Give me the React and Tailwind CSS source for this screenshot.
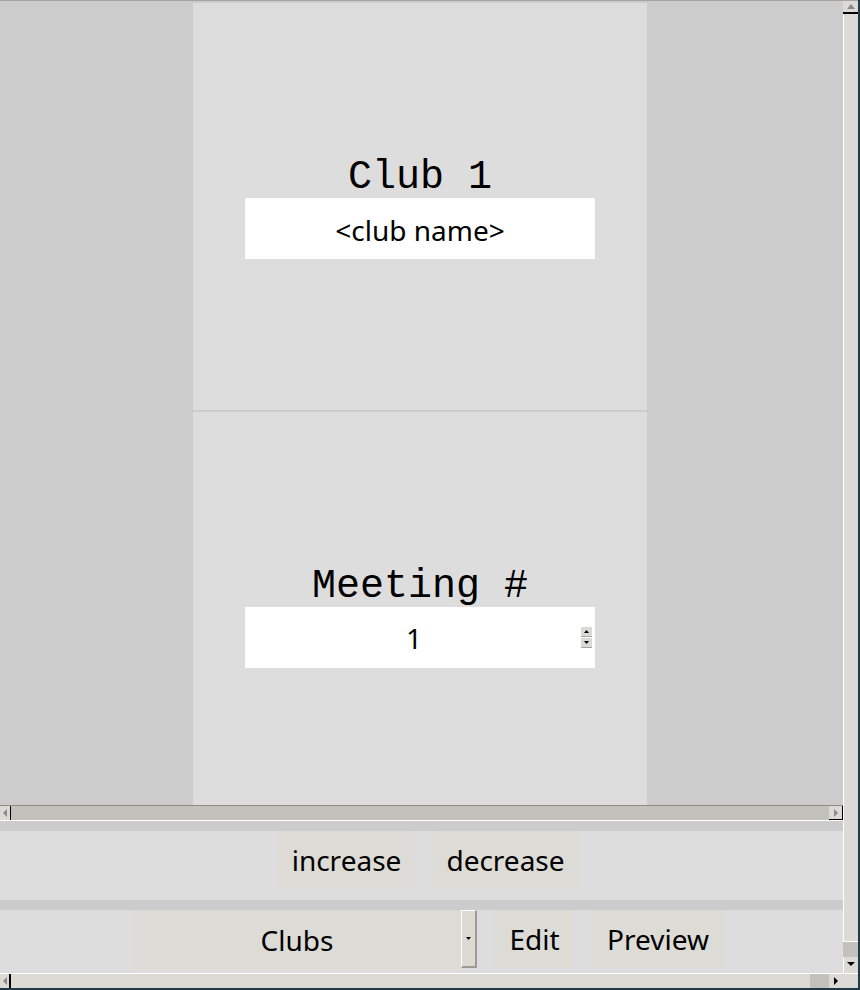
import React from "react";

const sans = { fontFamily: '"Noto Sans", "Open Sans", sans-serif' };
const mono = { fontFamily: '"Liberation Mono", "DejaVu Sans Mono", monospace' };

function Tri({ dir = "up", color = "#000", w = 6, h = 4 }) {
  const pts =
    dir === "up"
      ? `0,${h} ${w / 2},0 ${w},${h}`
      : dir === "down"
      ? `0,0 ${w},0 ${w / 2},${h}`
      : dir === "left"
      ? `${h},0 ${h},${w} 0,${w / 2}`
      : `0,0 0,${w} ${h},${w / 2}`;
  const vw = dir === "up" || dir === "down" ? w : h;
  const vh = dir === "up" || dir === "down" ? h : w;
  return (
    <svg width={vw} height={vh} viewBox={`0 0 ${vw} ${vh}`} className="block">
      <polygon points={pts} fill={color} />
    </svg>
  );
}

export default function App() {
  return (
    <div className="w-[860px] h-[990px] flex bg-[#cccccc] overflow-hidden" style={sans}>
      {/* main column */}
      <div className="w-[843px] h-[990px] flex flex-col shrink-0">
        <div className="h-[1px] shrink-0 bg-[#a6a39f]" />
        {/* canvas */}
        <div className="h-[804px] shrink-0 flex pt-[2px] pl-[193px]">
          <div className="w-[454px] flex flex-col bg-[#dddddd]">
            <div className="h-[407px] shrink-0 flex flex-col items-center pt-[155px]">
              <div className="text-[40px] leading-[40px] text-black" style={mono}>Club 1</div>
              <div className="w-[350px] h-[61px] bg-white flex items-center justify-center pt-[2px] text-[28px] text-black">
                &lt;club name&gt;
              </div>
            </div>
            <div className="h-[2px] shrink-0 bg-[#cccccc]" />
            <div className="flex-1 flex flex-col items-center pt-[155px]">
              <div className="text-[40px] leading-[40px] text-black" style={mono}>Meeting #</div>
              <div className="w-[350px] h-[61px] bg-white flex items-center">
                <div className="flex-1 text-center text-[28px] pl-[2px] text-black">1</div>
                <div className="w-[11px] mr-[3px] flex flex-col gap-[1px]">
                  <div className="h-[10px] bg-[#dcdad5] border-b border-[#a8a49d] flex items-center justify-center">
                    <Tri dir="up" w={5} h={3} />
                  </div>
                  <div className="h-[10px] bg-[#dcdad5] border-b border-[#a8a49d] flex items-center justify-center">
                    <Tri dir="down" w={5} h={3} />
                  </div>
                </div>
              </div>
            </div>
          </div>
        </div>
        {/* inner horizontal scrollbar */}
        <div className="h-[16px] shrink-0 flex border-t border-[#8c8a85] border-b border-b-white bg-[#c3c1bb]">
          <div className="w-[11px] bg-[#dcdad5] border-r border-black flex items-center justify-center">
            <Tri dir="left" color="#8a8a8a" w={8} h={4} />
          </div>
          <div className="flex-1" />
          <div className="w-[14px] bg-[#dcdad5] border-r border-b border-black flex items-center justify-center">
            <Tri dir="right" color="#8a8a8a" w={8} h={4} />
          </div>
        </div>
        <div className="h-[10px] shrink-0" />
        {/* row 1 */}
        <div className="h-[69px] shrink-0 bg-[#dddddd] flex pl-[278px] gap-[18px] pb-[11px] text-[28px] text-black">
          <div className="w-[137px] h-[58px] bg-[#dcdbd6] flex items-center justify-center">increase</div>
          <div className="w-[145px] h-[58px] bg-[#dcdbd6] flex items-center justify-center">decrease</div>
        </div>
        <div className="h-[10px] shrink-0" />
        {/* row 2 */}
        <div className="h-[63px] shrink-0 bg-[#dddddd] flex pl-[133px] text-[28px] text-black">
          <div className="w-[328px] h-[59px] bg-[#dcdbd6] flex items-center justify-center">Clubs</div>
          <div className="w-[16px] h-[58px] bg-[#dcdad5] border-l border-t border-white border-r-2 border-b-2 border-r-[#9e9a94] border-b-[#9e9a94] flex items-center justify-center">
            <Tri dir="down" w={5} h={3} />
          </div>
          <div className="w-[79px] h-[58px] ml-[18px] bg-[#dcdbd6] flex items-center justify-center">Edit</div>
          <div className="w-[132px] h-[58px] ml-[18px] bg-[#dcdbd6] flex items-center justify-center">Preview</div>
        </div>
        {/* outer horizontal scrollbar */}
        <div className="h-[15px] shrink-0 flex border-t border-white bg-[#dcdad5]">
          <div className="w-[11px] border-r-2 border-black flex items-center justify-center">
            <Tri dir="left" color="#8a8a8a" w={8} h={4} />
          </div>
          <div className="flex-1" />
          <div className="w-[19px] bg-[#c3c1bb]" />
          <div className="w-[14px] flex items-center justify-center">
            <Tri dir="right" color="#000" w={8} h={4} />
          </div>
        </div>
        <div className="h-[2px] shrink-0 bg-[#1e3a48]" />
      </div>
      {/* vertical scrollbar */}
      <div className="w-[17px] h-[990px] flex shrink-0">
        <div className="w-[15px] h-[990px] flex flex-col bg-[#dcdad5]">
          <div className="h-[1px] shrink-0 bg-[#a6a39f]" />
          <div className="h-[13px] shrink-0 border-b-2 border-black flex items-center justify-center">
            <Tri dir="up" color="#8a8a8a" w={8} h={5} />
          </div>
          <div className="flex-1 border-l border-white" />
          <div className="h-[16px] shrink-0 border-t border-white bg-[#c3c1bb]" />
          <div className="h-[13px] shrink-0 border-l border-white flex items-center justify-center">
            <Tri dir="down" color="#000" w={8} h={4} />
          </div>
          <div className="h-[3px] shrink-0 border-l border-white" />
          <div className="h-[15px] shrink-0 border-t border-white" />
          <div className="h-[2px] shrink-0 bg-[#1e3a48]" />
        </div>
        <div className="w-[2px] h-[990px] bg-[#1e3a48]" />
      </div>
    </div>
  );
}
